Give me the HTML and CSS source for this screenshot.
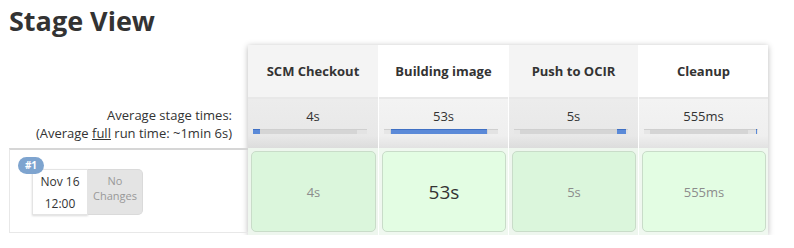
FILE: index.html
```html
<!DOCTYPE html>
<html>
<head>
<meta charset="utf-8">
<link rel="stylesheet" href="styles.css">
</head>
<body>
<h2 class="title">Stage View</h2>
<div class="stage-view">
  <div class="side">
    <div class="side-head"></div>
    <div class="side-avg">
      <div>Average stage times:</div>
      <div>(Average <u>full</u> run time: ~1min 6s)</div>
    </div>
    <div class="side-run">
      <span class="badge">#1</span>
      <div class="run-info">
        <div class="run-date">
          <div>Nov 16</div>
          <div>12:00</div>
        </div>
        <div class="run-changes">No<br>Changes</div>
      </div>
    </div>
  </div>
  <div class="stages">
    <div class="col odd">
      <div class="head">SCM Checkout</div>
      <div class="avg"><div class="avg-time">4s</div><div class="track"><span class="fill" style="left:0;width:7px"></span></div></div>
      <div class="cell"><div class="box small">4s</div></div>
    </div>
    <div class="col even">
      <div class="head">Building image</div>
      <div class="avg"><div class="avg-time">53s</div><div class="track"><span class="fill" style="left:7px;width:96px"></span></div></div>
      <div class="cell"><div class="box big">53s</div></div>
    </div>
    <div class="col odd">
      <div class="head">Push to OCIR</div>
      <div class="avg"><div class="avg-time">5s</div><div class="track"><span class="fill" style="left:103px;width:9px"></span></div></div>
      <div class="cell"><div class="box small">5s</div></div>
    </div>
    <div class="col even">
      <div class="head">Cleanup</div>
      <div class="avg"><div class="avg-time">555ms</div><div class="track"><span class="fill" style="left:112px;width:1px"></span></div></div>
      <div class="cell"><div class="box small">555ms</div></div>
    </div>
  </div>
</div>
</body>
</html>
```
FILE: styles.css
```css
* { box-sizing: border-box; }
body {
  margin: 0;
  padding: 0 0 0 9px;
  font-family: "Open Sans", "Noto Sans", sans-serif;
  color: #333;
  background: #fff;
}
.title {
  margin: 0;
  padding-top: 4px;
  height: 45px;
  font-size: 27px;
  font-weight: 700;
  line-height: 34px;
  color: #333;
}
.stage-view {
  display: flex;
  align-items: flex-start;
}
.side {
  width: 239px;
  flex: none;
}
.side-head { height: 52px; }
.side-avg {
  height: 51px;
  padding: 9px 16px 0 0;
  text-align: right;
  font-size: 13px;
  line-height: 18px;
  color: #333;
}
.side-run {
  position: relative;
  height: 85px;
  border: 1px solid #e8e8e8;
  border-top: 2px solid #d6d6d6;
  border-right: none;
}
.badge {
  position: absolute;
  left: 8px;
  top: 7px;
  z-index: 2;
  width: 26px;
  height: 17px;
  border-radius: 9px;
  background: #7ea4cf;
  color: #fff;
  font-size: 10px;
  font-weight: 700;
  line-height: 17px;
  text-align: center;
}
.run-info {
  display: flex;
  margin: 19px 0 0 22px;
}
.run-date {
  width: 56px;
  height: 46px;
  background: #fff;
  border: 1px solid #e4e4e4;
  box-shadow: 0 1px 2px rgba(0,0,0,0.15);
  text-align: center;
  font-size: 12px;
  line-height: 22px;
  padding-top: 1px;
  color: #333;
}
.run-changes {
  width: 55px;
  height: 46px;
  background: #e4e4e4;
  border: 1px solid #dadada;
  border-left: none;
  border-radius: 0 5px 5px 0;
  color: #999;
  font-size: 11px;
  line-height: 15px;
  text-align: center;
  padding-top: 3px;
}
.stages {
  display: flex;
  box-shadow: 0 1px 6px rgba(0,0,0,0.28);
}
.col {
  width: 130px;
  border-left: 1px solid #fff;
}
.col:first-child { border-left: none; }
.head {
  height: 52px;
  display: flex;
  align-items: center;
  justify-content: center;
  font-size: 13px;
  font-weight: 700;
  color: #333;
}
.odd .head { background: #f4f4f4; }
.even .head { background: #fff; }
.avg {
  height: 51px;
  border-top: 2px solid #e8e8e8;
  padding-top: 8px;
  text-align: center;
  font-size: 13px;
}
.odd .avg { background: linear-gradient(#ececec 0%, #e8e8e8 75%, #dcdcdc 100%); }
.even .avg { background: linear-gradient(#f3f3f3 0%, #efefef 75%, #e2e2e2 100%); }
.avg-time { height: 22px; line-height: 18px; }
.track {
  position: relative;
  margin-left: 5px;
  width: 114px;
  height: 5px;
  background: linear-gradient(to right, #e6e6e6 0, #e6e6e6 6px, #d5d5d5 6px, #d5d5d5 104px, #e3e3e3 104px);
  border-top: 1px solid #cfcfcf;
}
.fill {
  position: absolute;
  top: -1px;
  height: 5px;
  background: #5b8ad8;
  border-top: 1px solid #3f70c4;
}
.cell {
  height: 87px;
  padding: 3px 2px 3px 3px;
}
.odd .cell { background: #eef6ee; }
.even .cell { background: #f0f8f0; }
.box {
  height: 81px;
  border: 1px solid #c9dcc9;
  border-radius: 5px;
  display: flex;
  align-items: center;
  justify-content: center;
}
.odd .box { background: #dbf6dc; }
.even .box { background: #e3fde3; }
.box.small { font-size: 13px; color: #8c8c8c; }
.box.big { font-size: 19px; color: #333; }
```
